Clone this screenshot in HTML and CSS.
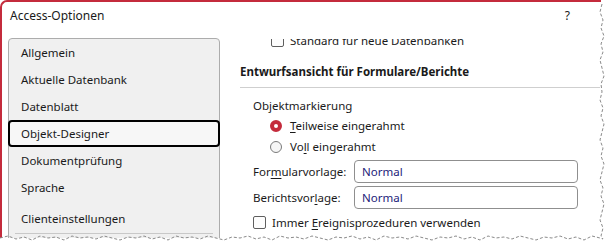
FILE: index.html
```html
<!DOCTYPE html>
<html lang="de">
<head>
<meta charset="utf-8">
<title>Access-Optionen</title>
<link rel="stylesheet" href="styles.css">
</head>
<body>
<div class="window">
  <div class="titlebar">
    <span class="title">Access-Optionen</span>
    <span class="help">?</span>
  </div>
  <div class="main">
    <nav class="nav">
      <div class="item">Allgemein</div>
      <div class="item">Aktuelle Datenbank</div>
      <div class="item">Datenblatt</div>
      <div class="item selected">Objekt-Designer</div>
      <div class="item">Dokumentprüfung</div>
      <div class="item">Sprache</div>
      <div class="item spaced">Clienteinstellungen</div>
      <div class="sep"></div>
    </nav>
    <div class="content">
      <div class="row top-row"><span class="cb"></span><span>Standard für neue Datenbanken</span></div>
      <div class="heading">Entwurfsansicht für Formulare/Berichte</div>
      <div class="section">
        <div class="label">Objektmarkierung</div>
        <div class="radio-row"><span class="radio on"></span><span><u>T</u>eilweise eingerahmt</span></div>
        <div class="radio-row"><span class="radio"></span><span>Vo<u>l</u>l eingerahmt</span></div>
        <div class="field"><span class="field-label">For<u>m</u>ularvorlage:</span><div class="input">Normal</div></div>
        <div class="field"><span class="field-label">Berichtsvor<u>l</u>age:</span><div class="input">Normal</div></div>
        <div class="row check-row"><span class="cb"></span><span>Immer <u>E</u>reignisprozeduren verwenden</span></div>
      </div>
    </div>
  </div>
</div>
<svg class="tear" width="609" height="248" viewBox="0 0 609 248">
  <path d="M602,4 L600,12 L603,20 L601,28 L604,36 L601,44 L603,52 L600,60 L602,68 L604,76 L601,84 L602,92 L600,100 L603,108 L601,116 L604,124 L602,132 L600,140 L603,148 L601,156 L604,164 L602,172 L600,180 L603,188 L601,196 L604,204 L602,212 L600,220 L603,228 L601,236 L603,239" />
  <path d="M0,238 L8,236 L16,239 L24,237 L32,240 L40,236 L48,238 L56,237 L64,240 L72,236 L80,238 L88,237 L96,239 L104,236 L112,238 L120,240 L128,237 L136,238 L144,236 L152,239 L160,237 L168,240 L176,236 L184,238 L192,237 L200,239 L208,236 L216,238 L224,240 L232,237 L240,238 L248,236 L256,239 L264,237 L272,240 L280,236 L288,238 L296,237 L304,239 L312,236 L320,238 L328,240 L336,237 L344,238 L352,236 L360,239 L368,237 L376,240 L384,236 L392,238 L400,237 L408,239 L416,236 L424,238 L432,240 L440,237 L448,238 L456,236 L464,239 L472,237 L480,240 L488,236 L496,238 L504,237 L512,239 L520,236 L528,238 L536,240 L544,237 L552,238 L560,236 L568,239 L576,237 L584,240 L592,236 L600,238 L603,239" />
</svg>
</body>
</html>
```
FILE: styles.css
```css
html, body {
  margin: 0;
  padding: 0;
  background: #ffffff;
}
body {
  width: 609px;
  height: 248px;
  overflow: hidden;
  position: relative;
  font-family: "Noto Sans", "Open Sans", sans-serif;
  font-size: 11.5px;
  color: #1a1a1a;
}
u {
  text-decoration: underline;
  text-underline-offset: 2px;
}
.window {
  box-sizing: border-box;
  width: 601px;
  height: 238px;
  border-top: 2px solid #c42b3c;
  border-left: 2px solid #c42b3c;
  border-top-left-radius: 7px;
  overflow: hidden;
  background: #ffffff;
}
.titlebar {
  height: 34px;
  display: flex;
  justify-content: space-between;
  align-items: flex-start;
  padding: 6px 0 0 8px;
  box-sizing: border-box;
  line-height: 16px;
  font-size: 12px;
}
.help {
  margin-right: 31px;
  font-size: 12px;
}
.main {
  display: flex;
  align-items: flex-start;
}
.nav {
  box-sizing: border-box;
  width: 212px;
  height: 240px;
  margin: 2px 0 0 6px;
  background: #f0f0f0;
  border: 1px solid #acacac;
  border-radius: 4px;
  flex: none;
}
.item {
  height: 27px;
  line-height: 27px;
  padding-left: 12px;
  white-space: nowrap;
}
.item.selected {
  box-sizing: border-box;
  margin: 0 -1px;
  border: 2px solid #000000;
  border-radius: 4px;
  line-height: 23px;
  padding-left: 11px;
  background: #f7f7f7;
}
.item.spaced {
  margin-top: 4px;
}
.sep {
  margin: 1px 6px 0;
  border-top: 1px solid #c8c8c8;
}
.content {
  margin: 3px 0 0 20px;
  width: 360px;
  height: 200px;
  overflow: hidden;
}
.row {
  display: flex;
  align-items: center;
  height: 20px;
  white-space: nowrap;
}
.top-row {
  margin-top: -9px;
  padding-left: 31px;
}
.cb {
  box-sizing: border-box;
  width: 13px;
  height: 13px;
  border: 1px solid #5f5f5f;
  border-radius: 2px;
  background: #fdfdfd;
  margin-right: 6px;
  flex: none;
}
.heading {
  margin-top: 12px;
  line-height: 20px;
  font-weight: 700;
  padding-bottom: 5px;
  border-bottom: 1px solid #cfcfcf;
  white-space: nowrap;
}
.section {
  padding-left: 13px;
}
.label {
  margin-top: 9px;
  line-height: 18px;
}
.radio-row {
  display: flex;
  align-items: center;
  height: 21px;
  padding-left: 17px;
  white-space: nowrap;
}
.radio {
  box-sizing: border-box;
  width: 12px;
  height: 12px;
  border-radius: 50%;
  border: 1px solid #7a7a7a;
  background: #f6f6f6;
  margin-right: 8px;
  flex: none;
}
.radio.on {
  border: 4px solid #c42b3c;
  background: #ffffff;
}
.field {
  display: flex;
  align-items: center;
  height: 23px;
  margin-top: 3px;
}
.field-label {
  width: 101px;
  flex: none;
  white-space: nowrap;
}
.input {
  box-sizing: border-box;
  width: 224px;
  height: 23px;
  border: 1px solid #8f8f8f;
  border-radius: 4px;
  padding-left: 7px;
  line-height: 21px;
  color: #23237a;
}
.check-row {
  margin-top: 3px;
}
.tear {
  position: absolute;
  left: 0;
  top: 0;
  fill: none;
  stroke: #8a8a8a;
  stroke-width: 1;
  stroke-dasharray: 3 2;
}
```
